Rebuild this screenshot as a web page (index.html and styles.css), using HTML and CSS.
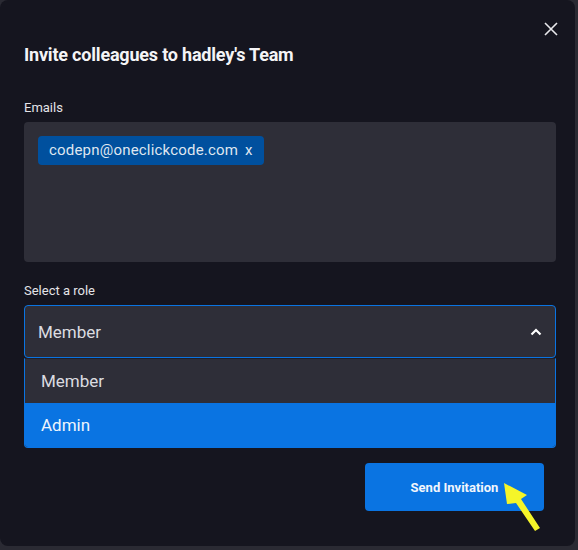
FILE: index.html
```html
<!DOCTYPE html>
<html lang="en">
<head>
    <meta charset="UTF-8">
    <meta name="viewport" content="width=device-width, initial-scale=1.0">
    <title>Invite colleagues</title>
    <link rel="stylesheet" href="styles.css">
</head>
<body>
    <div class="modal">
        <button type="button" class="close" aria-label="Close">
            <svg width="14" height="14" viewBox="0 0 14 14"><path d="M1 1L13 13M13 1L1 13" stroke="#e8e8ec" stroke-width="1.6"/></svg>
        </button>
        <h2 class="title">Invite colleagues to hadley's Team</h2>

        <label class="field-label">Emails</label>
        <div class="emails">
            <span class="chip">codepn@oneclickcode.com <span class="chip-x">x</span></span>
        </div>

        <label class="field-label role-label">Select a role</label>
        <div class="select">
            <span>Member</span>
            <svg width="12" height="8" viewBox="0 0 12 8"><path d="M1.5 6.5L6 2L10.5 6.5" fill="none" stroke="#fff" stroke-width="2.2"/></svg>
        </div>
        <ul class="options">
            <li>Member</li>
            <li class="active">Admin</li>
        </ul>

        <div class="actions">
            <button type="submit" class="send">Send Invitation</button>
            <svg class="pointer" width="44" height="54" viewBox="0 0 44 54"><polygon points="1,1 24,13 18,17 37,46 32,49 13,21 4,22" fill="#f5f529"/></svg>
        </div>
    </div>
</body>
</html>
```

FILE: styles.css
```css
body {
    margin: 0;
    padding: 0;
    background: #2a2a33;
    font-family: Roboto, 'Noto Sans', sans-serif;
    color: #e6e6ea;
}
.modal {
    position: relative;
    box-sizing: border-box;
    width: 575px;
    height: 546px;
    padding: 44px 19px 0 24px;
    background: #15151f;
    border-radius: 8px;
}
.close {
    position: absolute;
    top: 22px;
    right: 17px;
    background: none;
    border: none;
    padding: 0;
    cursor: pointer;
    line-height: 0;
}
.title {
    margin: 0;
    font-size: 18px;
    line-height: 22px;
    font-weight: 700;
    color: #f4f4f6;
    letter-spacing: -0.2px;
}
.field-label {
    display: block;
    margin-top: 34px;
    font-size: 13px;
    line-height: 16px;
    color: #e4e4e8;
}
.role-label {
    margin-top: 21px;
}
.emails {
    margin-top: 6px;
    height: 140px;
    box-sizing: border-box;
    padding: 14px;
    background: #2e2e38;
    border-radius: 4px;
}
.chip {
    display: inline-block;
    height: 29px;
    line-height: 29px;
    padding: 0 11px;
    background: #00509e;
    border-radius: 4px;
    font-size: 15px;
    letter-spacing: 0.2px;
    color: #dfe6f0;
}
.chip-x {
    margin-left: 3px;
}
.select {
    margin-top: 6px;
    height: 53px;
    box-sizing: border-box;
    display: flex;
    align-items: center;
    justify-content: space-between;
    padding: 0 13px 0 13px;
    background: #2e2e38;
    border: 1px solid #0a74e2;
    border-radius: 4px;
    font-size: 17px;
    color: #dcdce0;
}
.options {
    list-style: none;
    margin: 0;
    padding: 0;
    border: 1px solid #0a74e2;
    border-top-color: #1f1f2a;
    border-radius: 0 0 4px 4px;
    overflow: hidden;
    background: #2e2e38;
    font-size: 17px;
}
.options li {
    height: 44px;
    line-height: 44px;
    padding-left: 16px;
    color: #dcdce0;
}
.options li.active {
    background: #0a74e2;
    color: #eef4fc;
}
.actions {
    position: relative;
    display: flex;
    justify-content: flex-end;
    margin-top: 15px;
    padding-right: 12px;
}
.send {
    width: 179px;
    height: 48px;
    background: #0a74e2;
    border: none;
    border-radius: 4px;
    color: #f2f6fc;
    font-family: Roboto, 'Noto Sans', sans-serif;
    font-size: 13px;
    font-weight: 700;
    cursor: pointer;
}
.pointer {
    position: absolute;
    top: 19px;
    left: 479px;
}
```
